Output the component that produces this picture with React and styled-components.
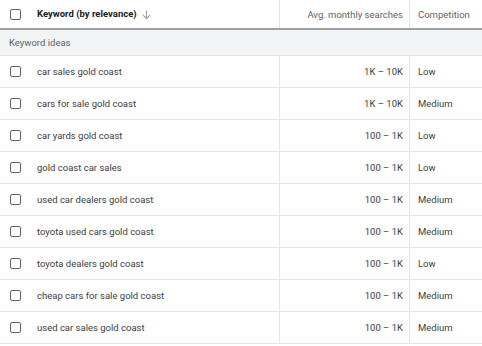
import React from "react";
import styled, { createGlobalStyle } from "styled-components";

const GlobalStyle = createGlobalStyle`
  body {
    margin: 0;
    background: #fff;
    font-family: Roboto, "Liberation Sans", Arial, sans-serif;
    -webkit-font-smoothing: antialiased;
  }
`;

const Table = styled.div`
  width: 482px;
  color: #3c4043;
  font-size: 9.5px;
`;

const Row = styled.div`
  display: grid;
  grid-template-columns: 279px 130px 73px;
  height: ${(p) => p.height}px;
  border-bottom: ${(p) => (p.head ? "2px solid #9aa0a6" : "1px solid #e3e5e8")};
`;

const Cell = styled.div`
  display: flex;
  align-items: center;
  justify-content: ${(p) => (p.right ? "flex-end" : "flex-start")};
  padding: ${(p) => (p.right ? "0 6px 0 0" : "0 0 0 8px")};
  border-left: ${(p) => (p.divider ? "1px solid #e3e5e8" : "none")};
  color: ${(p) => p.color || "inherit"};
  white-space: nowrap;
`;

const KeywordCell = styled.div`
  display: flex;
  align-items: center;
  gap: 16px;
  padding-left: 10px;
  color: ${(p) => (p.bold ? "#202124" : "inherit")};
  font-weight: ${(p) => (p.bold ? 700 : 400)};
`;

const Box = styled.span`
  width: 9px;
  height: 9px;
  border: 1.5px solid #5f6368;
  border-radius: 2px;
  flex-shrink: 0;
`;

const Arrow = styled.span`
  display: inline-flex;
  vertical-align: middle;
  margin-left: 5px;
  color: #9aa0a6;
`;

const Band = styled.div`
  display: flex;
  align-items: center;
  height: 25px;
  padding-left: 9px;
  background: #f1f3f4;
  border-bottom: 1px solid #e0e2e5;
  color: #5f6368;
`;

const rows = [
  ["car sales gold coast", "1K – 10K", "Low"],
  ["cars for sale gold coast", "1K – 10K", "Medium"],
  ["car yards gold coast", "100 – 1K", "Low"],
  ["gold coast car sales", "100 – 1K", "Low"],
  ["used car dealers gold coast", "100 – 1K", "Medium"],
  ["toyota used cars gold coast", "100 – 1K", "Medium"],
  ["toyota dealers gold coast", "100 – 1K", "Low"],
  ["cheap cars for sale gold coast", "100 – 1K", "Medium"],
  ["used car sales gold coast", "100 – 1K", "Medium"],
];

export default function App() {
  return (
    <>
      <GlobalStyle />
      <Table>
        <Row head height={28}>
          <KeywordCell bold>
            <Box />
            <span>
              Keyword (by relevance)
              <Arrow>
                <svg width="9" height="10" viewBox="0 0 9 10">
                  <path d="M4.5 0.5v8M1 5.2l3.5 3.5 3.5-3.5" fill="none" stroke="currentColor" strokeWidth="1.1" />
                </svg>
              </Arrow>
            </span>
          </KeywordCell>
          <Cell right divider color="#5f6368">Avg. monthly searches</Cell>
          <Cell divider color="#5f6368">Competition</Cell>
        </Row>
        <Band>Keyword ideas</Band>
        {rows.map(([kw, vol, comp]) => (
          <Row key={kw} height={31}>
            <KeywordCell>
              <Box />
              <span>{kw}</span>
            </KeywordCell>
            <Cell right divider>{vol}</Cell>
            <Cell divider>{comp}</Cell>
          </Row>
        ))}
      </Table>
    </>
  );
}
